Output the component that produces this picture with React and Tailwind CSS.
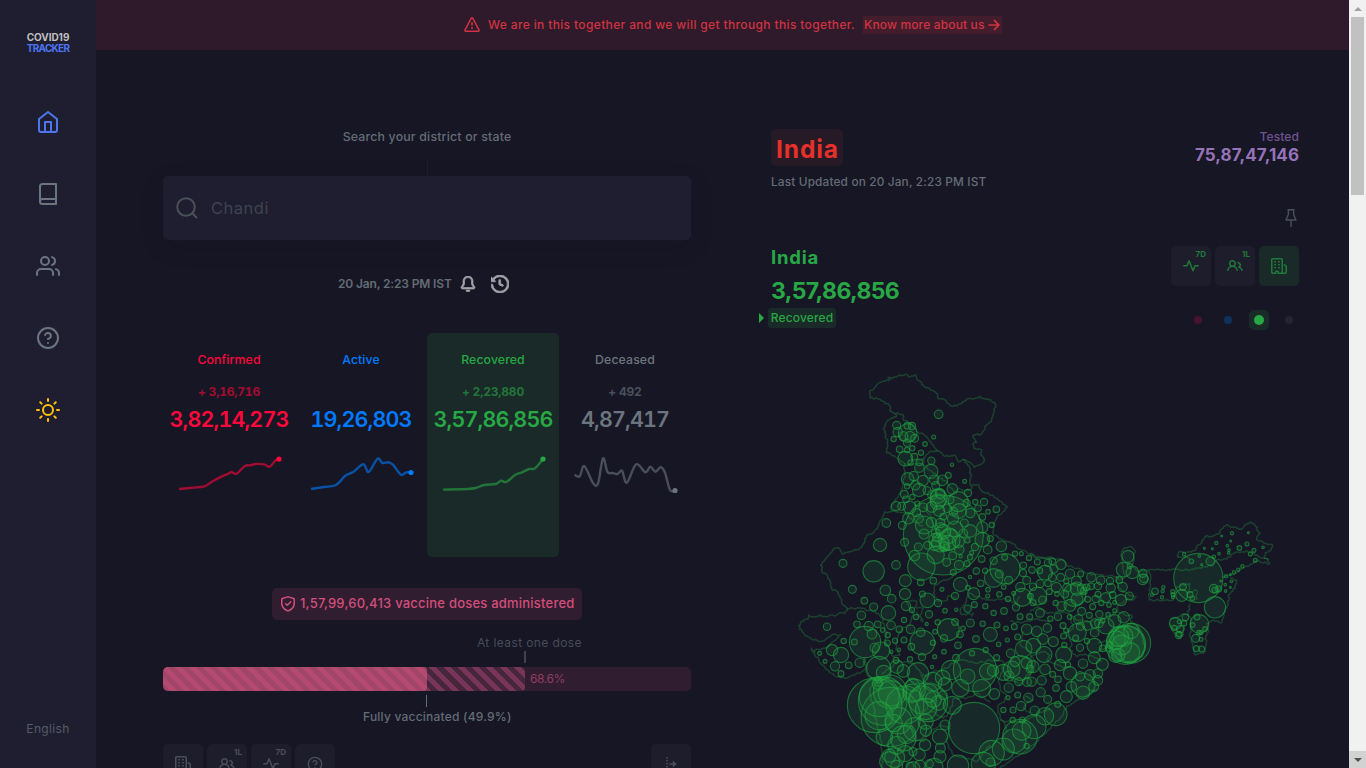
import React from "react";

/* ---------- icons ---------- */
const OCT = {
  alert: "M8.22 1.754a.25.25 0 00-.44 0L1.698 13.132a.25.25 0 00.22.368h12.164a.25.25 0 00.22-.368L8.22 1.754zm-1.763-.707c.659-1.234 2.427-1.234 3.086 0l6.082 11.378A1.75 1.75 0 0114.082 15H1.918a1.75 1.75 0 01-1.543-2.575L6.457 1.047zM9 11a1 1 0 11-2 0 1 1 0 012 0zm-.25-5.25a.75.75 0 00-1.5 0v2.5a.75.75 0 001.5 0v-2.5z",
  people: "M5.5 3.5a2 2 0 100 4 2 2 0 000-4zM2 5.5a3.5 3.5 0 115.898 2.549 5.507 5.507 0 013.034 4.084.75.75 0 11-1.482.235 4.001 4.001 0 00-7.9 0 .75.75 0 01-1.482-.236A5.507 5.507 0 013.102 8.05 3.49 3.49 0 012 5.5zM11 4a.75.75 0 100 1.5 1.5 1.5 0 01.666 2.844.75.75 0 00-.416.672v.352a.75.75 0 00.574.73c1.2.289 2.162 1.2 2.522 2.372a.75.75 0 101.434-.44 5.01 5.01 0 00-2.56-3.012A3 3 0 0011 4z",
  pulse: "M6 2a.75.75 0 01.696.471L10 10.731l1.304-3.26A.75.75 0 0112 7h3.25a.75.75 0 010 1.5h-2.742l-1.812 4.528a.75.75 0 01-1.392 0L6 4.77 4.696 8.03A.75.75 0 014 8.5H.75a.75.75 0 010-1.5h2.742l1.812-4.529A.75.75 0 016 2z",
  history: "M1.643 3.143L.427 1.927A.25.25 0 000 2.104V5.75c0 .138.112.25.25.25h3.646a.25.25 0 00.177-.427L2.715 4.215a6.5 6.5 0 11-1.18 4.458.75.75 0 10-1.493.154 8.001 8.001 0 101.6-5.684zM7.75 4a.75.75 0 01.75.75v2.992l2.028.812a.75.75 0 01-.557 1.392l-2.5-1A.75.75 0 017 8.25v-3.5A.75.75 0 017.75 4z",
  bell: "M8 16a2 2 0 001.985-1.75c.017-.137-.097-.25-.235-.25h-3.5c-.138 0-.252.113-.235.25A2 2 0 008 16z M8 1.5A3.5 3.5 0 004.5 5v2.947c0 .346-.102.683-.294.97l-1.703 2.556a.018.018 0 00-.003.01l.001.006c0 .002.002.004.004.006a.017.017 0 00.006.004l.007.001h10.964l.007-.001a.016.016 0 00.006-.004.016.016 0 00.004-.006l.001-.007a.017.017 0 00-.003-.01l-1.703-2.554a1.75 1.75 0 01-.294-.97V5A3.5 3.5 0 008 1.5zM3 5a5 5 0 0110 0v2.947c0 .05.015.098.042.139l1.703 2.555A1.518 1.518 0 0113.482 13H2.518a1.518 1.518 0 01-1.263-2.36l1.703-2.554A.25.25 0 003 7.947V5z",
  shield: "M8.533.133a1.75 1.75 0 00-1.066 0l-5.25 1.68A1.75 1.75 0 001 3.48V7c0 1.566.32 3.182 1.303 4.682.983 1.498 2.585 2.813 5.032 3.855a1.7 1.7 0 001.33 0c2.447-1.042 4.049-2.357 5.032-3.855C14.68 10.182 15 8.566 15 7V3.48a1.75 1.75 0 00-1.217-1.667L8.533.133zm-.61 1.429a.25.25 0 01.153 0l5.25 1.68a.25.25 0 01.174.238V7c0 1.358-.275 2.666-1.057 3.86-.784 1.194-2.121 2.34-4.366 3.297a.2.2 0 01-.154 0c-2.245-.956-3.582-2.104-4.366-3.298C2.775 9.666 2.5 8.36 2.5 7V3.48a.25.25 0 01.174-.237l5.25-1.68zM11.28 6.28a.75.75 0 00-1.06-1.06L7.25 8.19l-.97-.97a.75.75 0 10-1.06 1.06l1.5 1.5a.75.75 0 001.06 0l3.5-3.5z",
};

function Oct({ name, className }) {
  return (
    <svg viewBox="0 0 16 16" fill="currentColor" className={className}>
      <path fillRule="evenodd" d={OCT[name]} />
    </svg>
  );
}

function Building({ className }) {
  return (
    <svg viewBox="0 0 16 16" fill="none" stroke="currentColor" strokeWidth="1.5" strokeLinejoin="round" strokeLinecap="round" className={className}>
      <path d="M4.75 15.25h-3a1 1 0 01-1-1V1.75a1 1 0 011-1h8.5a1 1 0 011 1v12.5a1 1 0 01-1 1h-3v-2h-2.5zM13.3 6.9l1.3.8a1 1 0 01.65.9v5.65a1 1 0 01-1 1h-3.5" />
      <path d="M3.7 3.75h.6M3.7 6.75h.6M3.7 9.75h.6M7.7 3.75h.6M7.7 6.75h.6M7.7 9.75h.6" />
    </svg>
  );
}

function Feather({ children, className }) {
  return (
    <svg viewBox="0 0 24 24" fill="none" stroke="currentColor" strokeWidth="2" strokeLinecap="round" strokeLinejoin="round" className={className}>
      {children}
    </svg>
  );
}

function Question({ className }) {
  return (
    <Feather className={className}>
      <circle cx="12" cy="12" r="10" />
      <path d="M9.09 9a3 3 0 015.83 1c0 2-3 3-3 3M12 17h.01" />
    </Feather>
  );
}

/* ---------- sparklines ---------- */
function smooth(p) {
  let d = `M${p[0][0]},${p[0][1]}`;
  for (let i = 0; i < p.length - 1; i++) {
    const a = p[i - 1] || p[i], b = p[i], c = p[i + 1], e = p[i + 2] || c;
    d += `C${b[0] + (c[0] - a[0]) / 6},${b[1] + (c[1] - a[1]) / 6} ${c[0] - (e[0] - b[0]) / 6},${c[1] - (e[1] - b[1]) / 6} ${c[0]},${c[1]}`;
  }
  return d;
}

const STATS = [
  { label: "Confirmed", delta: "+ 3,16,716", total: "3,82,14,273", color: "text-[#ff073a]",
    pts: [[16,39],[29,37.7],[41.4,36.3],[50,31],[59,26.3],[64,24.3],[68.5,22.3],[73.7,23.7],[81.8,16],[87.7,15.3],[92.3,14],[101,14.4],[106.7,16.7],[112.3,10.7],[116,9]] },
  { label: "Active", delta: "", total: "19,26,803", color: "text-[#007bff]",
    pts: [[16,39],[29,37],[41,35],[50,26],[58.6,21.7],[68.4,14.3],[73.7,22],[82.5,8.7],[87.4,13],[93.7,12.3],[98,14.7],[106,24.7],[111,22.3],[116,22.5]] },
  { label: "Recovered", delta: "+ 2,23,880", total: "3,57,86,856", color: "text-[#28a745]", active: true,
    pts: [[16,39.6],[40.7,39],[49.5,37.7],[57,35],[68.8,34],[74,30.7],[79.3,32],[88,25],[95,22.3],[102,19],[108,18.3],[116,9]] },
  { label: "Deceased", delta: "+ 492", total: "4,87,417", color: "text-[#6c757d]",
    pts: [[15.5,25],[20.7,26.3],[25.3,16],[34,33],[39,33.5],[44,8.3],[48.5,22],[53.4,23],[58.6,24],[63,20.7],[67.8,32.7],[77.2,14.3],[86.4,22.3],[91.3,16.7],[96.5,21.7],[101.5,17.3],[106,22.7],[111,40],[116,40.5]] },
];

function Stat({ s }) {
  const last = s.pts[s.pts.length - 1];
  return (
    <div className={`flex h-56 w-[132px] flex-col items-center rounded-[5px] pt-[19px] ${s.color} ${s.active ? "bg-[#1a2a29]" : ""}`}>
      <div className="h-4 text-[12.3px] leading-4 font-medium tracking-[0.1px]">{s.label}</div>
      <div className="mt-4 h-4 text-[12px] leading-4 font-bold tracking-[-0.2px] tabular-nums opacity-60">{s.delta}</div>
      <div className="mt-[3px] h-8 text-[21.5px] leading-8 font-semibold tracking-[-0.88px] whitespace-nowrap tabular-nums">{s.total}</div>
      <svg className="mt-[15px] h-[50px] w-[132px]" viewBox="0 0 132 50">
        <path d={smooth(s.pts)} fill="none" stroke="currentColor" strokeWidth="2.4" strokeOpacity="0.6" />
        <circle cx={last[0]} cy={last[1]} r="2.6" fill="currentColor" />
      </svg>
    </div>
  );
}

/* ---------- map ---------- */
/* Each tile lists district bubbles as "x,y,r" and borders, on a grid of thirds of a pixel. */
const TILES = [
  {
    x: 790, y: 365,
    c: "446,148,13 431,216,6 405,237,7 486,299,5 524,349,6 320,181,12 352,182,10 366,183,11 323,201,14 353,204,28 340,214,14 360,214,15 374,220,12 311,222,8 351,233,11 329,253,10 351,255,8 367,250,8 393,263,8 346,281,22 373,275,10 362,293,8 388,292,10 424,287,11 388,308,14 423,319,21 475,331,9 457,346,16 353,342,19 371,333,14 399,347,16 432,344,14 351,364,8 376,361,14 387,375,20 411,377,12 437,362,12 487,372,16 534,384,11 343,388,12 348,403,10 367,396,8 318,423,14 335,424,12 359,427,19 382,416,8 400,427,13 427,389,14 444,393,22 451,386,15 443,410,23 446,400,26 480,404,12 505,410,30 530,414,11 556,411,8 582,411,11 425,426,16 447,437,17 472,430,13 490,440,13 507,438,22 541,444,14 564,430,10 594,440,7 619,433,10 355,460,17 380,443,12 387,461,13 337,481,12 289,474,13 270,540,20 403,480,27 424,472,15 451,474,14 489,461,17 523,474,12 577,456,10 577,487,17 605,480,8 344,532,12 385,546,12 402,507,15 438,505,14 460,500,22 495,492,24 520,505,13 541,498,19 577,524,22 601,521,9 413,541,12 436,525,20 434,541,16 479,512,23 474,534,23 478,524,32 505,530,18 464,545,14 456,551,6 471,546,9 508,554,14 532,526,8 555,546,11 593,554,13 545,563,6 634,544,16 488,572,12 512,574,5 540,577,8 575,582,10 460,510,120 394,605,41 437,570,26 373,572,16 159,595,12 318,600,13 470,592,12 507,600,14 611,587,11 675,566,8 694,566,6 717,579,8 644,577,9 645,611,45 700,601,10 531,596,9 451,535,26 441,517,13 452,490,17 460,455,10",
    p: [
      "M238,82L252,70L268,53L300,43L294,38L306,41L320,35L346,28L360,36L376,29L382,45L402,63L430,77L443,88L445,101L465,105L480,121L490,124L510,117L530,103L560,98L570,94L578,100L602,103L617,120L610,145L604,170L590,180L580,198L575,207L549,210L560,232L549,236L552,250L574,254L573,270L583,285L575,297L559,302L553,307L535,290L519,283L505,290L492,270L475,275L460,272L445,258L425,237L405,212L384,202L368,180L352,170L339,162L338,148L316,146L300,139L299,122L283,110L270,103L240,98L238,82",
      "M316,146L318,156L303,159L286,178L280,190L285,205L292,232L290,263L312,272L330,285L342,295L373,297L400,280L407,270L425,259L445,258",
      "M519,283L540,310L543,335L540,355L545,370L520,380L508,370L494,380L465,347L440,330L418,315L400,300L400,280",
      "M342,295L345,330L338,370L330,385L303,424L305,440L283,441L275,462L263,490L250,503L230,511L222,535L207,553L190,557L171,562L156,566L148,550L136,549L125,562L110,580L92,602",
      "M305,440L345,442L370,470L400,482",
      "M545,362L562,358L580,381L610,392L630,409L652,427L622,455L612,475L608,501L625,520L660,530L690,553L720,566L740,577L780,580",
      "M400,427L420,450L430,480L447,500L459,530L470,560",
    ],
  },
  {
    x: 790, y: 565,
    c: "251,19,32 187,73,12 223,107,10 251,126,12 286,76,16 305,101,13 346,47,18 345,87,17 348,123,14 366,135,8 392,52,10 430,47,10 397,87,9 412,106,22 444,114,11 456,73,6 417,148,11 295,144,22 214,151,13 201,178,10 111,185,11 161,228,8 193,231,9 126,255,17 153,270,23 105,289,6 89,265,6 135,304,14 176,301,10 209,293,14 153,326,9 303,181,13 263,178,10 236,183,14 328,193,10 342,165,8 378,156,8 362,193,13 225,231,47 246,207,15 254,248,14 293,210,8 315,227,8 342,225,9 273,257,26 304,260,5 327,254,5 292,234,9 278,195,7 397,233,37 364,245,10 429,233,8 392,202,13 410,177,5 435,200,7 443,172,8 475,194,33 495,171,10 462,220,11 510,208,10 519,190,7 504,241,10 462,260,7 434,275,6 396,276,11 360,283,8 426,306,5 465,137,7 495,93,11 511,58,21 490,22,9 540,36,5 499,134,5 533,131,11 551,86,18 553,119,9 534,68,7 559,18,10 572,55,10 594,74,7 593,93,6 585,17,8 611,39,28 628,27,12 541,174,12 578,176,8 586,124,8 611,144,8 642,138,10 601,208,21 558,222,10 621,180,9 648,190,7 626,238,7 652,225,6 628,88,8 641,66,7 654,102,8 656,46,12 671,85,6 678,127,11 697,97,27 691,66,14 699,24,11 710,46,12 721,94,9 690,155,9 719,155,9 673,185,9 710,193,16 683,216,9 662,265,13 701,251,25 675,290,15 690,309,37 665,313,25 710,294,17 720,312,12 657,333,15 640,322,24 620,278,9 587,255,8 546,265,8 555,315,65 498,278,10 483,315,29 533,334,22 592,319,24 609,317,17 575,370,27 511,369,26 613,387,16 656,368,14 686,350,12 711,351,13 683,390,9 654,398,6 715,398,14 640,435,8 669,435,9 693,423,14 668,465,8 697,465,9 384,325,32 340,318,19 320,305,20 318,286,9 266,310,36 281,323,22 262,358,15 266,345,9 265,350,14 254,421,82 278,408,73 268,395,60 267,452,42 303,385,38 345,420,57 325,467,40 302,456,89 300,380,50 368,360,20 373,375,33 366,385,28 428,350,28 416,385,28 408,432,32 415,412,58 397,405,42 430,403,24 445,414,22 458,338,22 465,358,20 459,391,13 487,421,27 375,493,35 407,470,23 465,480,15 408,497,17 350,508,28 340,520,38 311,474,26 283,517,25 320,541,27 345,566,24 298,572,20 314,578,30 299,590,30 388,569,18 369,560,12 405,540,17 450,515,23 451,549,15 450,575,18 418,596,12 433,606,26 504,602,32 390,600,15 360,604,12 552,489,77 580,598,36 605,564,38 640,552,33 601,592,13 672,528,36 690,515,52 710,543,8 695,498,28 370,610,20 320,604,18",
    p: [
      "M92,0L97,23L110,28L120,50L125,72L140,78L150,98L160,120L171,130L195,132L215,130L230,137L250,140L265,145L275,160",
      "M171,130L164,147L148,143L136,153L125,150L110,155L90,150L70,155L56,150L54,162L34,169L25,182L35,194L44,211L65,222L83,228L106,225L125,210L152,209L140,222L120,237L110,247L90,254L78,253L74,263L65,249L68,260L86,284L110,314L140,335L166,340L190,330L215,320L226,310L222,280",
      "M222,280L230,300L227,320L238,335L252,342L240,370L243,400L252,430L256,460L265,495L275,530L275,560L278,609",
      "M275,160L290,200L285,230L300,260L310,275L330,270L318,250L325,210L335,190L360,180L370,150L360,130L350,110L380,108L375,125L400,130L390,150L398,170L380,140",
      "M434,90L432,65L450,50L480,40L490,30M434,90L445,110L473,105L475,92L500,100",
      "M516,150L512,130L525,118L535,85L560,95L600,105L640,100L680,115L690,95",
      "M516,150L550,145L545,155M275,330L300,310L325,290L370,295L390,320L410,335L430,320L470,310L495,290L520,285L560,295L600,285L640,290",
      "M640,290L638,320L625,350L635,380L650,390L640,412L622,425L630,460L650,470L690,470L730,455L780,430",
      "M390,330L410,355L395,385L415,420L400,450L430,440L460,460L480,440L490,400L530,400L560,385L600,412",
      "M365,480L370,520L400,530L420,500L450,480L480,490L470,530L490,570L560,590L600,540",
      "M660,170L700,172L740,160L780,170M700,200L690,240L720,260L735,300L710,330L690,360L660,340",
    ],
  },
  {
    x: 1030, y: 500,
    c: "67,184,10 54,188,11 93,194,15 72,207,12 92,232,12 67,233,12 45,218,22 22,186,9 29,212,9 120,221,14 152,222,9 139,243,15 184,232,14 212,241,13 240,243,11 268,240,10 278,261,14 242,264,14 54,250,10 79,262,15 58,275,9 30,251,12 111,263,13 109,244,8 133,285,34 141,266,20 156,266,14 141,297,18 162,273,10 170,262,10 173,298,9 183,259,10 204,258,11 204,283,9 197,297,11 227,293,15 248,285,10 273,300,17 298,288,12 254,307,6 237,315,7 214,309,8 188,320,9 120,316,18 95,319,14 77,309,8 104,282,12 81,282,7 119,351,7 155,334,12 178,346,9 208,343,11 234,344,7 254,332,6 145,358,14 84,350,11 61,356,8 30,339,13 99,377,9 52,384,13 108,391,7 142,398,27 151,379,12 137,414,9 172,377,14 195,370,14 207,370,13 218,362,7 228,378,24 254,363,19 281,352,17 101,408,9 103,435,8 70,425,15 39,417,16 20,394,16 150,443,11 194,398,13 193,437,22 171,423,8 218,445,10 235,446,9 193,473,18 217,493,18 159,491,14 101,464,24 42,463,24 90,495,17 114,494,8 120,520,20 68,523,9 45,508,16 84,538,10 35,541,14 78,564,10 32,577,14 9,500,18 10,437,22 5,545,14 150,529,14 159,555,36 180,525,16 204,520,14 203,541,15 191,560,15 159,578,20 124,560,16 109,590,18 240,435,10 292,433,55 302,430,60 286,435,58 279,409,30 266,410,30 304,393,23 275,435,30 299,457,30 265,465,20 256,467,20 258,420,28 53,598,12 23,288,27 9,308,9 38,300,12 9,260,11 6,210,10 294,169,18 281,209,22 299,198,8 307,217,19 339,220,12 338,238,16 342,235,13 505,234,74 555,322,32 484,184,7 541,184,13 552,170,5 508,168,4 515,194,3 462,163,5 559,129,5 523,145,3 547,146,3 606,100,5 575,108,3 655,98,3 592,137,4 597,150,4 596,159,4 602,123,3 567,161,4 628,144,7 651,132,6 672,151,6 661,162,6 699,142,4 676,181,6 625,209,5 612,217,5 601,224,3 588,229,5 604,244,4 586,254,4 587,273,4 572,243,3 601,262,3 637,199,5 566,267,9 551,266,13 555,270,9 375,274,10 400,262,5 398,274,5 396,292,5 428,275,6 429,284,6 366,284,5 429,292,5 459,261,10 455,286,18 480,284,9 487,295,7 436,370,18 466,352,10 462,370,8 451,388,11 446,405,11 433,384,8 448,365,6 447,403,8 501,351,9 508,372,28 525,387,7 488,375,7 513,398,6 507,398,7 497,415,12 513,418,6 499,446,9 515,447,9",
    p: [
      "M0,160L20,175L55,172L80,178L100,180L110,195L150,208L165,218L190,224L210,225L235,228L258,230L270,240L285,232L278,205L275,180L275,155L285,143L305,140L314,150L312,180L309,200L325,215L355,210",
      "M355,212L385,208L405,212L440,208L480,210L520,200L548,197L560,180L590,177L610,160L650,152L672,160L685,170L715,178L717,193L707,186L680,183L665,192L640,205L615,220L595,228L575,230",
      "M444,173L447,155L470,158L495,152L500,138L515,128L527,109L548,108L565,103L574,88L590,73L605,82L632,88L645,75L662,66L676,78L690,100L680,118L705,130L727,133L723,150L706,158L703,175L715,178",
      "M444,173L470,172L480,178M355,212L362,230L360,250L357,300L400,300L430,300L440,260L480,250L475,280L500,270L498,300",
      "M600,235L620,240L615,265L595,285L597,300L585,330L575,368L550,360L530,370L536,395L527,410L528,435L520,460L495,465L488,430L480,400L485,360L475,340L480,310",
      "M420,360L445,350L460,342L475,345M420,370L430,395L450,415L460,400L462,375",
      "M258,230L262,260L290,280L318,290L310,300L285,300L265,315L260,335L285,345L304,345L302,365L325,380L335,400L345,440L335,470L315,480L290,490",
      "M0,335L25,320L50,340L90,335L120,340L140,360L180,365L220,355L260,335",
      "M120,345L130,385L110,400L125,430L120,450L140,470L165,462L190,470L215,485",
      "M205,430L235,420L230,445L210,450M0,470L40,455L60,465L50,480L85,495L110,505",
    ],
  },
  {
    x: 1000, y: 600,
    c: "173,313,9 104,332,14 135,349,26 167,343,34 102,380,36",
    p: ["M290,265L255,290L225,305L200,318L190,342L165,370L140,395L110,425L80,452L48,470L20,490L0,504", "M75,290L100,300L80,310L70,325L90,340M0,360L15,370L20,395"],
  },
];

/* Breaks straight border segments into short, slightly offset steps, as natural borders have. */
function rough(d) {
  let seed = d.length;
  const rnd = () => {
    seed = (seed * 16807 + 11) % 2147483647;
    return seed / 2147483647 - 0.5;
  };
  return d
    .split("M")
    .filter(Boolean)
    .map((part) => {
      const pts = part.split("L").map((s) => s.split(",").map(Number));
      let out = `M${pts[0]}`;
      for (let i = 1; i < pts.length; i++) {
        const [x0, y0] = pts[i - 1], [x1, y1] = pts[i];
        const len = Math.hypot(x1 - x0, y1 - y0);
        const n = Math.max(1, Math.round(len / 6));
        for (let k = 1; k < n; k++) {
          const o = rnd() * 6;
          out += `L${(x0 + ((x1 - x0) * k) / n - ((y1 - y0) / len) * o).toFixed(1)},${(y0 + ((y1 - y0) * k) / n + ((x1 - x0) / len) * o).toFixed(1)}`;
        }
        out += `L${x1},${y1}`;
      }
      return out;
    })
    .join("");
}

function MapChart() {
  return (
    <svg className="mt-[15px] h-[423px] w-[528px] text-[#28a745]" viewBox="771 345 528 423">
      {TILES.map((t, i) => (
        <g key={"p" + i} transform={`translate(${t.x} ${t.y}) scale(0.33333)`} fill="none" stroke="currentColor" strokeWidth="4.6" strokeOpacity="0.3" strokeLinejoin="round">
          {t.p.map((d, k) => (
            <path key={k} d={rough(d)} />
          ))}
        </g>
      ))}
      {TILES.map((t, i) => (
        <g key={"c" + i} transform={`translate(${t.x} ${t.y}) scale(0.33333)`} fill="#28a745" fillOpacity="0.13" stroke="#1fa742" strokeWidth="3.3" strokeOpacity="0.6">
          {t.c.split(" ").map((s, k) => {
            const [x, y, r] = s.split(",");
            return <circle key={k} cx={x} cy={y} r={r} />;
          })}
        </g>
      ))}
    </svg>
  );
}

/* ---------- page ---------- */
function Sidebar() {
  return (
    <nav className="flex h-full w-24 shrink-0 flex-col items-center bg-[#1e1e30] text-[#6c757d]">
      <div className="mt-[32px] flex flex-col items-center text-[10px] leading-[11px] font-bold">
        <span className="tracking-[-0.05px] text-[#bfbfbf]">COVID19</span>
        <span className="tracking-[-0.7px] text-[#4c75f2]">TRACKER</span>
      </div>
      <div className="mt-14 flex flex-col gap-12">
        <Feather className="size-6 text-[#4c75f2]">
          <path d="M3 9l9-7 9 7v11a2 2 0 01-2 2H5a2 2 0 01-2-2z" />
          <path d="M9 22V12h6v10" />
        </Feather>
        <Feather className="size-6">
          <path d="M4 19.5A2.5 2.5 0 016.5 17H20" />
          <path d="M6.5 2H20v20H6.5A2.5 2.5 0 014 19.5v-15A2.5 2.5 0 016.5 2z" />
        </Feather>
        <Feather className="size-6">
          <path d="M17 21v-2a4 4 0 00-4-4H5a4 4 0 00-4 4v2" />
          <circle cx="9" cy="7" r="4" />
          <path d="M23 21v-2a4 4 0 00-3-3.87M16 3.13a4 4 0 010 7.75" />
        </Feather>
        <Question className="size-6" />
        <Feather className="size-6 text-[#ffc107]">
          <circle cx="12" cy="12" r="5" />
          <path d="M12 1v2M12 21v2M4.22 4.22l1.42 1.42M18.36 18.36l1.42 1.42M1 12h2M21 12h2M4.22 19.78l1.42-1.42M18.36 5.64l1.42-1.42" />
        </Feather>
      </div>
      <div className="mt-auto mb-[31px] text-[12px] leading-4 tracking-[0.35px] text-[#555b66]">English</div>
    </nav>
  );
}

function Banner() {
  return (
    <div className="flex h-[50px] items-center bg-[#2e1a2a] pl-[368px] text-[12px] font-medium text-[#d03343]">
      <Oct name="alert" className="size-4" />
      <span className="ml-2 w-[375px] tracking-[0.36px] whitespace-nowrap">We are in this together and we will get through this together.</span>
      <span className="flex h-[18px] w-[139px] items-center bg-[#441d2c] pl-px tracking-[0.15px] whitespace-nowrap">
        <span className="w-[121px]">Know more about us</span>
        <svg viewBox="0 0 16 16" className="size-4" fill="none" stroke="currentColor" strokeWidth="1.7">
          <path d="M3.5 8h10.2M9 3.2L13.8 8 9 12.8" />
        </svg>
      </span>
    </div>
  );
}

function Tool({ children, tag, className }) {
  return (
    <div className={`relative flex size-10 items-center justify-center rounded-[5px] ${className}`}>
      {children}
      {tag && <span className="absolute top-[3px] right-[5px] text-[8px] leading-[10px] font-bold">{tag}</span>}
    </div>
  );
}

function Left() {
  return (
    <section className="flex w-[528px] flex-col items-center">
      <div className="text-[12.3px] leading-4 font-medium tracking-[0.2px] text-[#656c75]">Search your district or state</div>
      <div className="mt-[15px] h-4 w-px bg-[#1e1e30]" />
      <div className="flex h-16 w-full items-center rounded-[5px] bg-[#1e1e30] pl-3 shadow-[0_7px_24px_rgba(17,17,28,0.12)]">
        <Feather className="size-6 text-[#4a505a]">
          <circle cx="11" cy="11" r="8.8" />
          <path d="M21.5 21.5l-4.2-4.2" />
        </Feather>
        <span className="ml-3 text-[16.5px] tracking-[0.5px] text-[#3f4350]">Chandi</span>
      </div>
      <div className="mt-[35px] ml-[175px] flex h-[18px] w-[178px] items-center self-start text-[12px] font-semibold text-[#656c75]">
        <span className="w-[122px] shrink-0 tracking-[-0.15px] whitespace-nowrap">20 Jan, 2:23 PM IST</span>
        <Oct name="bell" className="size-4 shrink-0 stroke-current stroke-[0.7px] text-[#a2a3a8]" />
        <Oct name="history" className="ml-[15px] size-[18px] shrink-0 stroke-current stroke-[0.7px] text-[#a2a3a8]" />
      </div>
      <div className="mt-10 flex">
        {STATS.map((s) => (
          <Stat key={s.label} s={s} />
        ))}
      </div>
      <div className="mt-[31px] flex h-8 w-[310px] items-center rounded-[5px] bg-[#301d30] pl-2 text-[13px] font-medium text-[#d34f7b]">
        <Oct name="shield" className="size-4" />
        <span className="ml-1 tracking-[0.22px] whitespace-nowrap">1,57,99,60,413 vaccine doses administered</span>
      </div>
      <div className="mt-[15px] flex h-4 w-full justify-end pr-[109px] text-[12px] leading-4 tracking-[0.4px] text-[#484c58]">At least one dose</div>
      <div className="mb-1 ml-[361px] h-3 w-[1.5px] self-start bg-[#40434f]" />
      <div className="flex h-6 w-full items-center overflow-hidden rounded-[5px] bg-[#301d30]">
        <div className="flex h-full w-[362px] shrink-0 overflow-hidden rounded-r-[4px] bg-[repeating-linear-gradient(45deg,#47263b_0_5px,#77355a_5px_10px)]">
          <div className="h-full w-[264px] rounded-[4px] bg-[repeating-linear-gradient(45deg,#a24667_0_5px,#b44a72_5px_10px)]" />
        </div>
        <span className="ml-[5px] text-[12px] tracking-[-0.4px] text-[#8f3e61]">68.6%</span>
      </div>
      <div className="mt-1 ml-[263px] h-3 w-px self-start bg-[#656c75]" />
      <div className="mt-[2px] ml-[200px] self-start text-[12px] leading-4 font-medium tracking-[0.22px] text-[#656c75]">Fully vaccinated (49.9%)</div>
      <div className="mt-[19px] flex w-full gap-1 text-[#4b4f5b]">
        <Tool className="bg-[#1d1d2b]"><Building className="size-4" /></Tool>
        <Tool className="bg-[#1d1d2b]" tag="1L"><Oct name="people" className="size-4" /></Tool>
        <Tool className="bg-[#1d1d2b]" tag="7D"><Oct name="pulse" className="size-4" /></Tool>
        <Tool className="bg-[#1d1d2b]"><Question className="size-4" /></Tool>
        <Tool className="ml-auto bg-[#1d1d2b]">
          <svg viewBox="0 0 16 16" className="size-4" fill="none" stroke="currentColor" strokeWidth="1.5">
            <path d="M4 1v14" strokeDasharray="1.5 1.5" />
            <path d="M6.5 8h6" />
            <path d="M10 5l3.5 3L10 11z" fill="currentColor" strokeWidth="0.5" />
          </svg>
        </Tool>
      </div>
    </section>
  );
}

function Right() {
  return (
    <section className="flex w-[528px] flex-col">
      <div className="flex h-[62px] justify-between">
        <div>
          <div className="flex h-[37px] w-[72px] items-center justify-center rounded-[5px] bg-[#261a26] pt-[3px] pl-px text-[24.5px] font-bold tracking-[0.9px] text-[#e6302a]">India</div>
          <div className="mt-2 text-[11.8px] leading-4 font-medium tracking-[0.17px] whitespace-nowrap text-[#656c75]">Last Updated on 20 Jan, 2:23 PM IST</div>
        </div>
        <div className="text-right">
          <div className="text-[12px] leading-4 font-medium tracking-[0.1px] text-[#6f5390]">Tested</div>
          <div className="text-[17px] leading-5 font-bold tracking-[0.08px] text-[#9673b9]">75,87,47,146</div>
        </div>
      </div>
      <div className="mt-[18px] mr-[-1px] flex justify-end">
        <svg viewBox="0 0 18 18" className="size-[18px] text-[#4b4f5b]" fill="none" stroke="currentColor" strokeWidth="1.4" strokeLinejoin="round">
          <path d="M5.5.8h7M6.4 1v4.5L4 11h10l-2.4-5.5V1M9 11v7" />
        </svg>
      </div>
      <div className="mt-[19px] flex justify-between text-[#28a745]">
        <div>
          <div className="text-[18.5px] leading-[22px] font-bold tracking-[0.8px]">India</div>
          <div className="mt-2 text-[23px] leading-[30px] font-bold tracking-[-0.62px]">3,57,86,856</div>
          <div className="mt-[2px] ml-[-12px] flex items-center">
            <span className="h-0 w-0 border-y-[5px] border-l-[5px] border-y-transparent border-l-[#28a745]" />
            <span className="ml-1 flex h-5 w-[68px] items-center justify-center rounded-[3px] bg-[#1a2a29] text-[12px] font-medium tracking-[0.15px]">Recovered</span>
          </div>
        </div>
        <div className="flex flex-col">
          <div className="flex gap-1 text-[#1f7a3a]">
            <Tool className="bg-[#1d1d2b]" tag="7D"><Oct name="pulse" className="size-4" /></Tool>
            <Tool className="bg-[#1d1d2b]" tag="1L"><Oct name="people" className="size-4" /></Tool>
            <Tool className="bg-[#1a2a29]"><Building className="size-4" /></Tool>
          </div>
          <div className="mt-6 flex h-5 items-center pl-[23px]">
            <span className="size-2 rounded-full bg-[#46152d]" />
            <span className="ml-[22px] size-2 rounded-full bg-[#12305c]" />
            <span className="ml-[17px] flex size-5 items-center justify-center rounded-[5px] bg-[#1a2a29]">
              <span className="size-[10px] rounded-full bg-[#28a745]" />
            </span>
            <span className="ml-4 size-2 rounded-full bg-[#242533]" />
          </div>
        </div>
      </div>
      <MapChart />
    </section>
  );
}

function Scrollbar() {
  return (
    <div className="flex h-full w-[17px] shrink-0 flex-col items-center bg-[#f1f1f1]">
      <div className="flex h-[17px] w-full items-center justify-center">
        <span className="h-0 w-0 border-x-[4px] border-b-[4px] border-x-transparent border-b-[#a3a3a3]" />
      </div>
      <div className="h-[178px] w-[13px] bg-[#c1c1c1]" />
      <div className="mt-auto flex h-[17px] w-full items-center justify-center bg-[#d2d2d2]">
        <span className="h-0 w-0 border-x-[4px] border-t-[4px] border-x-transparent border-t-[#505050]" />
      </div>
    </div>
  );
}

export default function App() {
  return (
    <div className="flex h-[768px] w-[1366px] overflow-hidden bg-[#161625] font-['Inter',sans-serif]">
      <Sidebar />
      <main className="h-full flex-1 overflow-hidden">
        <Banner />
        <div className="flex gap-20 pt-[79px] pl-[67px]">
          <Left />
          <Right />
        </div>
      </main>
      <Scrollbar />
    </div>
  );
}
